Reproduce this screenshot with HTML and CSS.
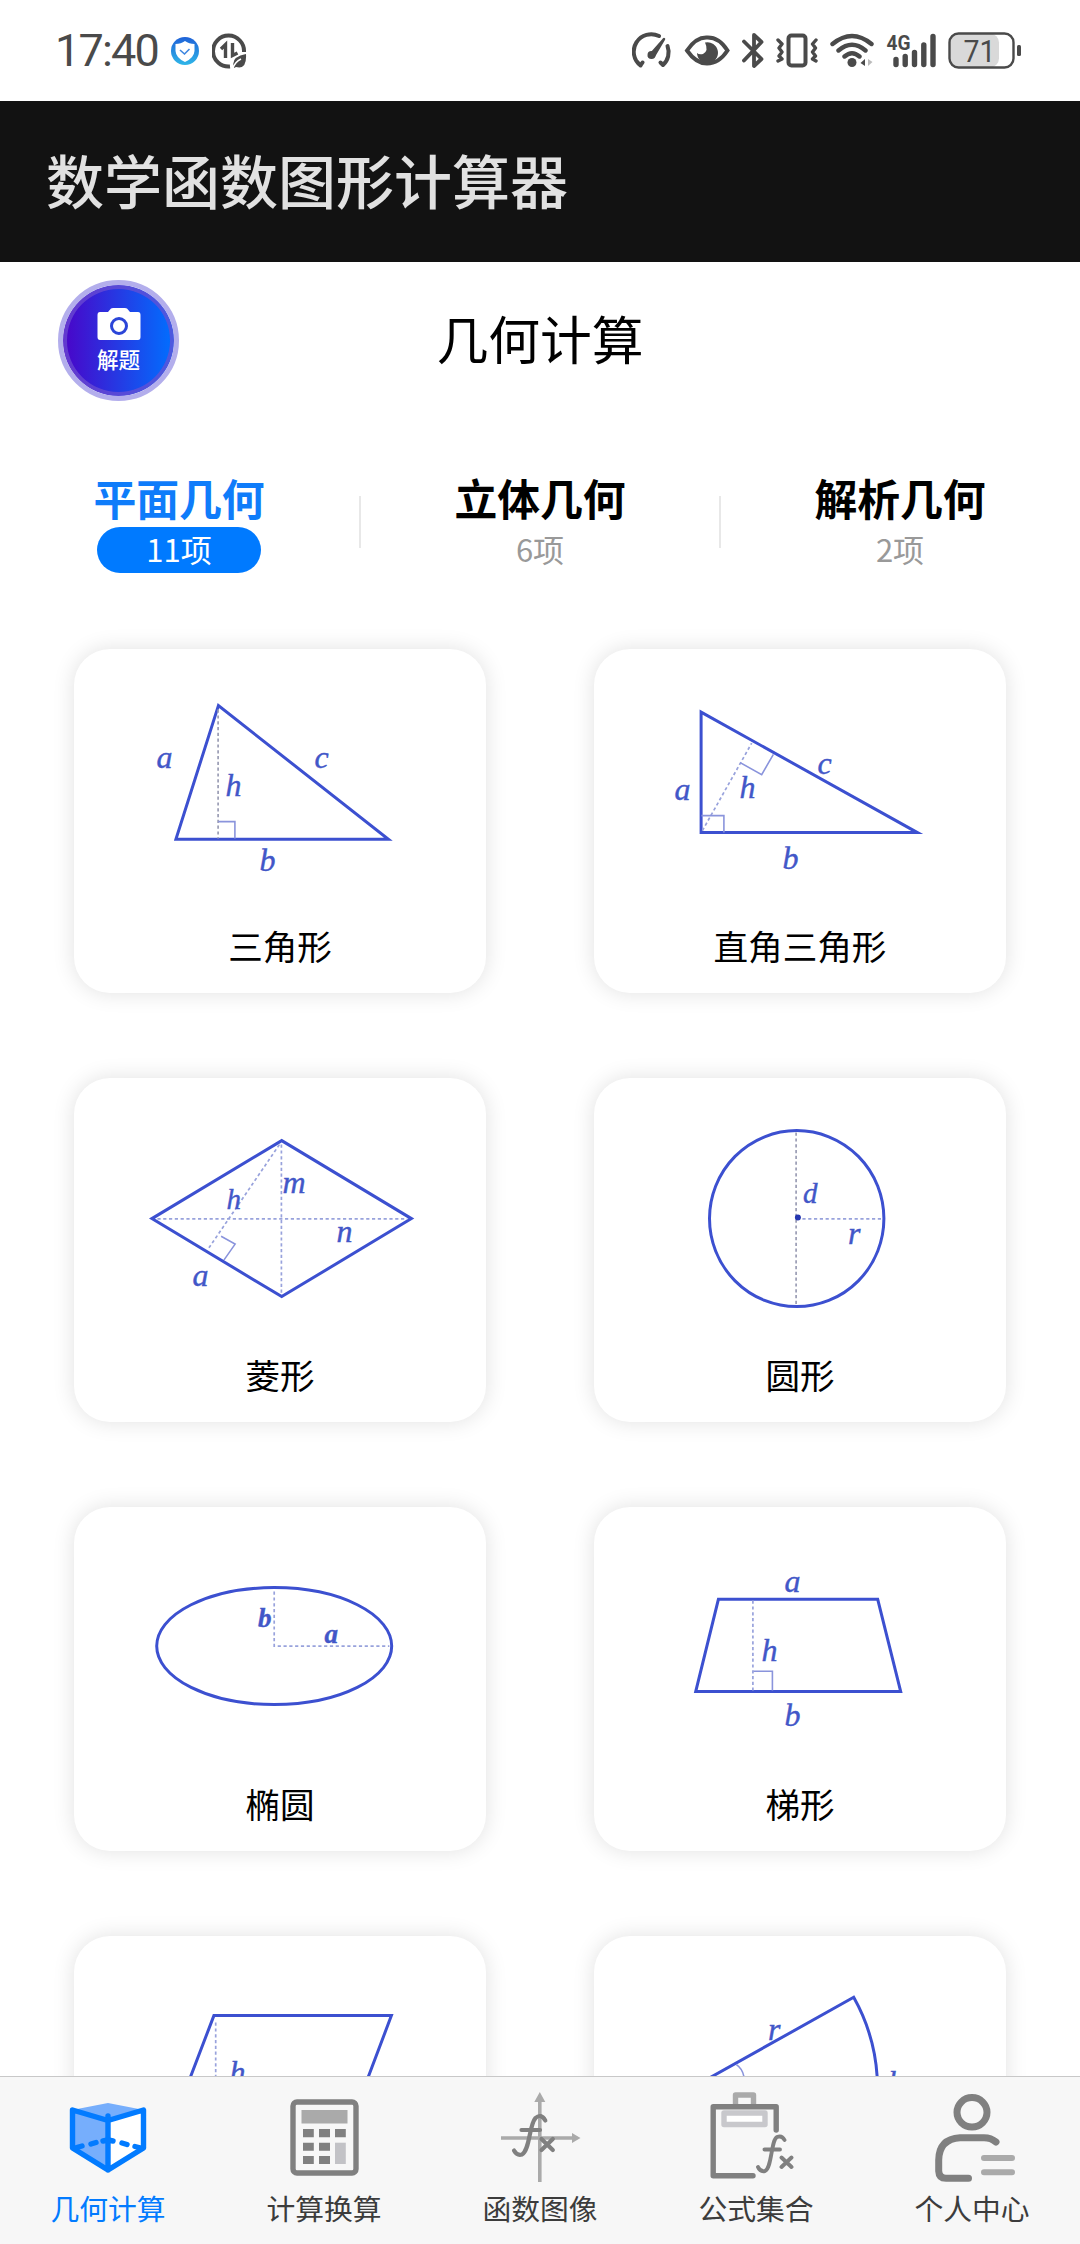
FILE: index.html
```html
<!DOCTYPE html>
<html lang="zh-CN">

<head>
    <meta charset="UTF-8">
    <meta name="viewport" content="width=device-width, initial-scale=1.0">
    <title>数学函数图形计算器</title>
    <link rel="stylesheet" href="styles.css">
</head>

<body>
    <div class="statusbar">
        <div class="status-left">
            <span class="time">17:40</span>
            <svg class="shield" width="28" height="28" viewBox="0 0 28 28">
                <defs>
                    <linearGradient id="shieldFill" x1="0" y1="0" x2="0" y2="1">
                        <stop offset="0" stop-color="#1f62d8"/>
                        <stop offset="1" stop-color="#2fb6e8"/>
                    </linearGradient>
                </defs>
                <circle cx="14" cy="14" r="14" fill="url(#shieldFill)"/>
                <path d="M14 4Q18 7 23.500 7V14Q23 21 14 25Q5 21 4.500 14V7Q10 7 14 4Z" fill="#fff"/>
                <path d="M9 13L13.500 17L18.500 12" fill="none" stroke="#3d86e0" stroke-width="1.600"/>
            </svg>
            <svg width="35" height="36" viewBox="0 0 35 36" fill="none" stroke="#4a4a4a">
                <path d="M18 33.500A15.500 15.500 0 1 1 32 19" stroke-width="4"/>
                <path d="M9 16L13.500 11.500V25M20.500 10V22.500L25.500 20" stroke-width="3.400"/>
                <path d="M22 35Q18 24 34 21Q35 37 24 34Z" fill="#4a4a4a" stroke="none"/>
                <path d="M21 35Q23 29 29 26" stroke="#fff" stroke-width="1.500"/>
            </svg>
        </div>
        <div class="status-right">
            <svg width="40" height="40" viewBox="0 0 40 40" fill="none" stroke="#4a4a4a" stroke-width="4" stroke-linecap="round" stroke-linejoin="round">
                <path d="M4.500 30L8.500 34.500L10.500 31.500M8.500 34.500A17.500 17.500 0 0 1 27 5"/>
                <path d="M35.500 15A17.500 17.500 0 0 1 31 34L28.500 31.500"/>
                <path d="M32 8L17 25L22 25Z" stroke-width="2.500" fill="#4a4a4a"/>
                <circle cx="19.500" cy="24" r="3" fill="#4a4a4a" stroke-width="2"/>
            </svg>
            <svg width="46" height="40" viewBox="0 0 46 40">
                <path d="M3 19.500Q12 6 23 6.500Q35 6 43.500 19.500Q35 32.500 23 32.500Q12 32.500 3 19.500Z" fill="none" stroke="#4a4a4a" stroke-width="4"/>
                <path d="M21 11.500A10.500 10.500 0 1 1 13 22Q15 24 19 23Q25 20 21 11.500Z" fill="#4a4a4a"/>
            </svg>
            <svg width="22" height="40" viewBox="0 0 22 40" fill="none" stroke="#4a4a4a" stroke-width="3.800" stroke-linecap="round" stroke-linejoin="round">
                <path d="M2 10.500L19.500 28L12 35V4L19.500 11L2 29.500"/>
            </svg>
            <svg width="42" height="40" viewBox="0 0 42 40" fill="none" stroke="#4a4a4a" stroke-linecap="round" stroke-linejoin="round">
                <rect x="12.500" y="4.500" width="17" height="30" rx="3" stroke-width="4"/>
                <path d="M2 9L6 13L3 17L6 21L3 25L6 28L2 30M40 9L36.500 13L39.500 17L36.500 21L39.500 25L36.500 28L40 30" stroke-width="3.400"/>
            </svg>
            <svg width="44" height="40" viewBox="0 0 44 40" fill="none" stroke="#4a4a4a" stroke-width="4.400" stroke-linecap="round">
                <path d="M2.500 13Q22 -3 41.500 13M8.500 19.500Q22 8 35.500 19.500M14.500 25.500Q22 19 29.500 25.500"/>
                <circle cx="22" cy="31.500" r="4.500" fill="#4a4a4a" stroke="none"/>
                <path d="M35 28V35L30.500 32Z" fill="#4a4a4a" stroke="none"/>
                <path d="M38 28V35L42.500 31Z" fill="#bbb" stroke="none"/>
            </svg>
            <svg width="50" height="40" viewBox="0 0 50 40" stroke="#4a4a4a" stroke-width="5.400" stroke-linecap="round">
                <path d="M10 28.500V33.500M19.200 25.500V33.500M28.500 21.500V33.500M37.800 14V33.500M47 5.500V33.500"/>
                <text x="0.500" y="19" class="net" textLength="24" lengthAdjust="spacingAndGlyphs">4G</text>
            </svg>
            <svg width="74" height="40" viewBox="0 0 74 40">
                <rect x="2" y="2.500" width="49" height="34" rx="9" fill="#d9d9d9"/>
                <rect x="1.500" y="2.500" width="64" height="34" rx="9" fill="none" stroke="#4a4a4a" stroke-width="2.400"/>
                <rect x="69" y="14" width="4" height="11" rx="1.500" fill="#4a4a4a"/>
                <text x="31.500" y="30.500" class="battery" text-anchor="middle" textLength="32" lengthAdjust="spacingAndGlyphs">71</text>
            </svg>
        </div>
    </div>

    <header class="appbar">数学函数图形计算器</header>

    <div class="pagehead">
        <button class="solve">
            <svg width="44" height="34" viewBox="0 0 44 34">
                <path d="M3 5H11L14 1.500Q15 1 16 1H28Q29 1 30 1.500L33 5H41Q43.500 5 43.500 8V30Q43.500 33 41 33H3Q0.500 33 0.500 30V8Q0.500 5 3 5Z" fill="#fff"/>
                <circle cx="22" cy="19" r="7.500" fill="#fff" stroke="#2b45d8" stroke-width="3"/>
            </svg>
            <span>解题</span>
        </button>
        <h1>几何计算</h1>
    </div>

    <div class="tabs">
        <div class="tab active"><b>平面几何</b><span>11项</span></div>
        <div class="tab"><b>立体几何</b><span>6项</span></div>
        <div class="tab"><b>解析几何</b><span>2项</span></div>
    </div>

    <main class="grid">
        <div class="card">
            <svg class="shape" viewBox="0 0 412 270">
                <path class="line" d="M145 56L102.500 189.700H315Z"/>
                <path class="dash grey" d="M144.700 60V189"/>
                <path class="thin" d="M145 172H161.500V189"/>
                <text x="83" y="118">a</text>
                <text x="152" y="146.500">h</text>
                <text x="241" y="118">c</text>
                <text x="186" y="221.500">b</text>
            </svg>
            <p>三角形</p>
        </div>
        <div class="card">
            <svg class="shape" viewBox="0 0 412 270">
                <path class="line" d="M107.700 62.500V183H324Z"/>
                <path class="dash" d="M109 181L158.300 93.500"/>
                <path class="thin" d="M146.700 113L168.300 125L180 104.700M108 166H130.500V183"/>
                <text x="81" y="150">a</text>
                <text x="146" y="148">h</text>
                <text x="224" y="124.500">c</text>
                <text x="189" y="219">b</text>
            </svg>
            <p>直角三角形</p>
        </div>
        <div class="card">
            <svg class="shape" viewBox="0 0 412 270">
                <path class="line" d="M208.300 62L78.500 140L208.300 218L338 140Z"/>
                <path class="dash" d="M208 66V216M84 140.300H334M206 66L134 171.500"/>
                <path class="thin" d="M147.700 157.700L161.700 165.500L150.500 181.500"/>
                <text x="153" y="130" class="sm">h</text>
                <text x="209" y="114">m</text>
                <text x="263" y="163">n</text>
                <text x="119" y="207.500">a</text>
            </svg>
            <p>菱形</p>
        </div>
        <div class="card">
            <svg class="shape" viewBox="0 0 412 270">
                <ellipse class="line" cx="203.300" cy="140" rx="87.200" ry="88"/>
                <path class="dash grey" d="M202.700 54V227"/>
                <path class="dash" d="M209 140.300H289"/>
                <circle cx="204.500" cy="139" r="3" fill="#2536b0"/>
                <text x="209.500" y="124" class="sm">d</text>
                <text x="254.500" y="165">r</text>
            </svg>
            <p>圆形</p>
        </div>
        <div class="card">
            <svg class="shape" viewBox="0 0 412 270">
                <ellipse class="line" cx="200.800" cy="138.500" rx="117.500" ry="58.500"/>
                <path class="dash" d="M200.800 84V138.500H316"/>
                <text x="184.500" y="119" class="bold">b</text>
                <text x="251" y="135.500" class="bold">a</text>
            </svg>
            <p>椭圆</p>
        </div>
        <div class="card">
            <svg class="shape" viewBox="0 0 412 270">
                <path class="line" d="M125 91.700H284.300L307.300 184H102.300Z"/>
                <path class="dash" d="M159.500 93V183"/>
                <path class="thin" d="M160 163.700H179V183"/>
                <text x="191" y="84.500">a</text>
                <text x="168" y="153.500">h</text>
                <text x="191" y="218.500">b</text>
            </svg>
            <p>梯形</p>
        </div>
        <div class="card">
            <svg class="shape" viewBox="0 0 412 270">
                <path class="line" d="M140.500 79H318L278 185H100Z"/>
                <path class="dash" d="M142.300 86V185"/>
                <text x="156" y="146">h</text>
            </svg>
        </div>
        <div class="card">
            <svg class="shape" viewBox="0 0 412 270">
                <path class="line" d="M97 152L260.300 60.700A187 187 0 0 1 260.300 243.300Z"/>
                <path class="thin" d="M143 128Q149 132 150.500 140"/>
                <text x="174.500" y="103.500">r</text>
                <text x="294" y="156.500">l</text>
            </svg>
        </div>
    </main>

    <nav class="tabbar">
        <a class="active">
            <svg width="96" height="96" viewBox="0 0 96 96" stroke-linecap="round" stroke-linejoin="round" stroke="#027bff" fill="none" stroke-width="5.400">
                <path d="M12 22L48 15L84 22L48 33Z" fill="#76aefc" stroke="none"/>
                <path d="M12 22L48 33V83L12 60Z" fill="#76aefc" stroke="none"/>
                <path d="M48 33L84 22V60L48 83Z" fill="#fff" stroke="none"/>
                <path d="M12.500 22L48 32.500L83.500 22V60L48 82L12.500 60ZM48 28V82"/>
                <path d="M15 60L22 58M31 56L36 54.500M43 53L48 52L53 53M62 55L67 56.500M75 58.500L81 60"/>
            </svg>
            <span>几何计算</span>
        </a>
        <a>
            <svg width="96" height="96" viewBox="0 0 96 96" fill="#808080">
                <rect x="17" y="14" width="63" height="71" rx="4" fill="none" stroke="#808080" stroke-width="5.400"/>
                <rect x="25.500" y="22" width="46" height="13.500" fill="#aaa"/>
                <path d="M27 41H37.800V49.300H27ZM43 41H54V49.300H43ZM59 41H69.800V49.300H59ZM27 54.700H37.800V62.700H27ZM43 54.700H54V62.700H43ZM27 68H37.800V76H27ZM43 68H54V76H43Z"/>
                <rect x="59" y="54.700" width="10.800" height="21.300" fill="#c2c2c6"/>
            </svg>
            <span>计算换算</span>
        </a>
        <a>
            <svg width="96" height="96" viewBox="0 0 96 96" fill="none" stroke="#808080" stroke-linecap="round" stroke-width="4.200">
                <path d="M47.800 12V94M9 50H82" stroke="#aaa" stroke-width="3.600" stroke-linecap="butt"/>
                <path d="M47.800 4L53.300 14H42.300ZM88.500 50L80 45V55Z" fill="#aaa" stroke="none"/>
                <path d="M22 62.500Q25 68 30 66.500C38 62 37 37 43.500 30Q49 25 53.300 32.500M29.500 42H48M49.500 51L60.800 62M60.800 51L49.500 62"/>
            </svg>
            <span>函数图像</span>
        </a>
        <a>
            <svg width="96" height="96" viewBox="0 0 96 96" fill="none" stroke="#808080" stroke-linecap="round" stroke-linejoin="round" stroke-width="5.400">
                <path d="M27.500 18V7H45.500V18" stroke="#aaa"/>
                <rect x="16" y="25" width="41" height="11.500" stroke="#c8c8cc" fill="#fff"/>
                <path d="M68.200 42V18.700H5.200V87.700H45"/>
                <path d="M50 79Q52 84 57 83C64 80 63 52 69 49Q74 47 76.500 52M56.500 61.500H72M73.500 69.500L83.500 79M83.500 69.500L73.500 79" stroke-width="3.900"/>
            </svg>
            <span>公式集合</span>
        </a>
        <a>
            <svg width="96" height="96" viewBox="0 0 96 96" fill="none" stroke="#808080" stroke-linecap="round" stroke-width="7">
                <ellipse cx="48" cy="24.300" rx="15" ry="14.700"/>
                <path d="M72 54Q67 49.700 60 49.700H36Q15 51 14.700 72V83Q15 90.300 22 90.300H44.500"/>
                <path d="M60 70H88M60 84.300H88" stroke="#aaa" stroke-width="6"/>
            </svg>
            <span>个人中心</span>
        </a>
    </nav>
</body>
</html>
```
FILE: styles.css
```css
* {
    box-sizing: border-box;
}

body {
    margin: 0;
    height: 2244px;
    overflow: hidden;
    background: #fff;
    color: #000;
    font-family: "Noto Sans CJK SC", sans-serif;
    display: flex;
    flex-direction: column;
}

svg {
    display: block;
    flex: none;
}

/* status bar */
.statusbar {
    height: 101px;
    flex: none;
    display: flex;
    justify-content: space-between;
    align-items: center;
    padding: 0 58px 0 55px;
}

.status-left {
    display: flex;
    align-items: center;
}

.status-right {
    display: flex;
    gap: 12px;
}

.time {
    width: 116px;
    font: 45px/60px Roboto, sans-serif;
    letter-spacing: -1.8px;
    color: #4a4a4a;
}

.shield {
    margin-right: 13px;
}

.net {
    font: bold 21px Roboto, sans-serif;
    fill: #4a4a4a;
    stroke: none;
}

.battery {
    font: 32px Roboto, sans-serif;
    fill: #4a4a4a;
}

.appbar {
    height: 161px;
    flex: none;
    padding-left: 46px;
    background: #121212;
    color: #e1e1e1;
    font-size: 58px;
    font-weight: 500;
    line-height: 157px;
}

/* page title and solve button */
.pagehead {
    height: 156px;
    flex: none;
    display: grid;
    grid-template-columns: 1fr auto 1fr;
    align-items: center;
    padding: 0 58px;
}

.pagehead h1 {
    margin: 0 0 4px;
    font-size: 51.8px;
    font-weight: 400;
    line-height: 76px;
}

.solve {
    width: 121px;
    height: 121px;
    padding: 0;
    border: 5px solid #b3aeec;
    border-radius: 50%;
    background: linear-gradient(90deg, #4a04c8, #0070ff) padding-box;
    box-shadow: inset 0 0 0 4px rgba(110, 80, 210, 0.7);
    display: flex;
    flex-direction: column;
    align-items: center;
    justify-content: center;
    color: #fff;
    font: 500 21.6px/30px "Noto Sans CJK SC", sans-serif;
}

.solve span {
    margin-top: 3px;
}

/* category tabs */
.tabs {
    display: flex;
    flex: none;
    height: 180px;
    padding-top: 50px;
}

.tab {
    flex: 1;
    position: relative;
    display: flex;
    flex-direction: column;
    align-items: center;
}

.tab b {
    font-size: 42.8px;
    line-height: 59px;
}

.tab span {
    width: 164px;
    height: 46px;
    border-radius: 23px;
    font-size: 31px;
    line-height: 43px;
    text-align: center;
    color: #999;
}

.tab.active {
    right: 1px;
}

.tab.active b {
    color: #0f7cfa;
}

.tab.active span {
    background: #007aff;
    color: #fff;
}

.tab + .tab::before {
    content: "";
    position: absolute;
    left: -1px;
    top: 28px;
    width: 2px;
    height: 52px;
    background: #e8e8e8;
}

/* shape cards */
.grid {
    flex: 1;
    min-height: 0;
    overflow: hidden;
    display: grid;
    grid-template-columns: 412px 412px;
    grid-auto-rows: 344px;
    gap: 85px 108px;
    padding: 51px 0 0 74px;
}

.card {
    border-radius: 36px;
    background: #fff;
    box-shadow: 0 0 22px rgba(0, 0, 0, 0.12);
}

.card p {
    margin: 0;
    font-size: 34.6px;
    line-height: 52px;
    text-align: center;
}

.shape {
    width: 412px;
    height: 270px;
    transform: translate(-0.6px, 0.6px);
}

.shape text {
    font: italic 32px "Liberation Serif", serif;
    fill: #4257c8;
    stroke: #4257c8;
    stroke-width: 0.4px;
}

.shape .sm {
    font-size: 29px;
}

.shape .bold {
    font-size: 27px;
    font-weight: bold;
}

.line {
    fill: none;
    stroke: #3c50d0;
    stroke-width: 3;
}

.dash {
    fill: none;
    stroke: #98a2dc;
    stroke-width: 1.7;
    stroke-dasharray: 3.2 2.6;
}

.grey {
    stroke: #9a9cb4;
}

.thin {
    fill: none;
    stroke: #8a94dc;
    stroke-width: 1.6;
}

/* bottom navigation */
.tabbar {
    height: 168px;
    flex: none;
    display: flex;
    background: #f7f7f7;
    border-top: 1px solid #c8c8c8;
}

.tabbar a {
    flex: 1;
    display: flex;
    flex-direction: column;
    align-items: center;
    padding-top: 11px;
    font-size: 28.8px;
    line-height: 42px;
    color: #3c3c3c;
}

.tabbar span {
    margin-top: 3px;
}

.tabbar .active {
    color: #027bff;
}
```
